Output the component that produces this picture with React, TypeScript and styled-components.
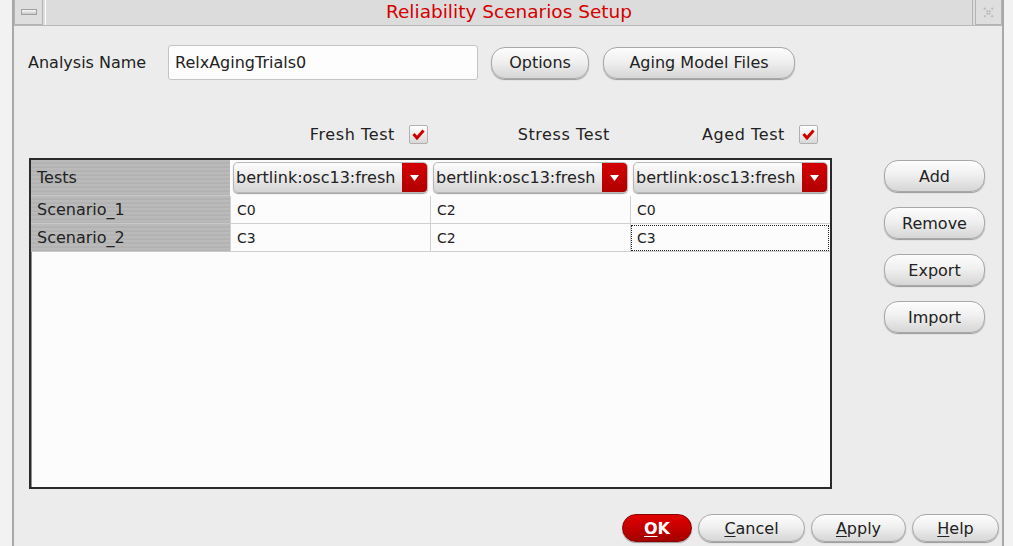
import styled, { createGlobalStyle } from 'styled-components';

const GlobalStyle = createGlobalStyle`
  body {
    margin: 0;
    background: #f2f2f2;
    font-family: 'DejaVu Sans', 'Liberation Sans', sans-serif;
    color: #222;
  }
`;

const Window = styled.div`
  margin-left: 12px;
  width: 992px;
  height: 546px;
  box-sizing: border-box;
  border-left: 2px solid #a8a8a8;
  border-right: 2px solid #a8a8a8;
  background: #ececec;
  display: flex;
  flex-direction: column;
  overflow: hidden;
`;

const TitleBar = styled.div`
  height: 25px;
  display: flex;
  background: #dcdcdc;
  border-bottom: 1px solid #b8b8b8;
`;

const TitleButton = styled.div<{ $w: number }>`
  width: ${({ $w }) => $w}px;
  box-sizing: border-box;
  border: 1px solid #b4b4b4;
  border-top: none;
  background: #dedede;
  display: flex;
  align-items: center;
  justify-content: center;
`;

const MinBar = styled.div`
  width: 14px;
  height: 4px;
  background: linear-gradient(#f8f8f8, #c8c8c8);
  border: 1px solid #a0a0a0;
`;

const Title = styled.div`
  flex: 1;
  margin: 0 2px;
  border-left: 1px solid #fff;
  border-right: 1px solid #b4b4b4;
  text-align: center;
  color: #d40000;
  font-size: 18.5px;
  line-height: 24px;
`;

const Content = styled.div`
  flex: 1;
  display: flex;
  flex-direction: column;
  padding: 19px 0 0 14px;
`;

const NameRow = styled.div`
  display: flex;
  align-items: center;
  height: 35px;
`;

const Label = styled.div`
  width: 140px;
  font-size: 16px;
`;

const TextInput = styled.div`
  width: 310px;
  height: 35px;
  box-sizing: border-box;
  border: 1px solid #c4c4c4;
  border-radius: 3px;
  background: #fdfdfd;
  padding-left: 6px;
  font-size: 16px;
  line-height: 33px;
`;

const PillButton = styled.div<{ $w: number; $h?: number; $ml?: number }>`
  width: ${({ $w }) => $w}px;
  height: ${({ $h }) => $h ?? 32}px;
  margin-left: ${({ $ml }) => $ml ?? 0}px;
  box-sizing: border-box;
  border: 1px solid #a8a8a8;
  border-radius: 14px;
  background: linear-gradient(#fdfdfd 0%, #f0f0f0 45%, #d6d6d6 100%);
  box-shadow: 0 1px 1px #9a9a9a;
  display: flex;
  align-items: center;
  justify-content: center;
  font-size: 16px;
  color: #222;
  flex-shrink: 0;
`;

const OkButton = styled(PillButton)`
  border-color: #8a0000;
  background: linear-gradient(#e20000 0%, #c40000 50%, #a20000 100%);
  color: #fff;
  font-weight: bold;
`;

const CheckRow = styled.div`
  margin-top: 45px;
  display: grid;
  grid-template-columns: 202px 200px 200px 200px;
  height: 19px;
  font-size: 16px;
  letter-spacing: 0.6px;
`;

const CheckCell = styled.div<{ $pr: number }>`
  display: flex;
  align-items: center;
  justify-content: flex-end;
  gap: 14px;
  padding-right: ${({ $pr }) => $pr}px;
`;

const CheckBox = styled.div`
  width: 19px;
  height: 19px;
  box-sizing: border-box;
  border: 1px solid #b0b0b0;
  border-radius: 2px;
  background: linear-gradient(#ffffff, #d8d8d8);
  display: flex;
  align-items: center;
  justify-content: center;
`;

const MainRow = styled.div`
  margin-top: 14px;
  display: flex;
`;

const Table = styled.div`
  margin-left: 1px;
  width: 803px;
  height: 331px;
  box-sizing: border-box;
  border: 2px solid #2a2a2a;
  box-shadow: inset 1px 1px 0 #909090;
  background: #fcfcfc;
  display: grid;
  grid-template-columns: 199px 200px 200px 200px;
  grid-template-rows: 36px 28px 28px;
  align-content: start;
`;

const HeadCell = styled.div`
  background: repeating-linear-gradient(#bababa 0px, #bababa 2px, #aeaeae 3px, #b6b6b6 4px);
  border-bottom: 1px solid #c8c8c8;
  padding-left: 6px;
  display: flex;
  align-items: center;
  font-size: 16px;
`;

const ColumnHead = styled.div`
  padding: 2px 2px 2px 3px;
  background: #fcfcfc;
`;

const Dropdown = styled.div`
  height: 31px;
  box-sizing: border-box;
  display: flex;
  border: 1px solid #b8b8b8;
  border-radius: 5px;
  background: linear-gradient(#fdfdfd, #e6e6e6 60%, #d4d4d4);
  box-shadow: 0 1px 1px #a0a0a0;
  overflow: hidden;
  font-size: 16px;
`;

const DropText = styled.div`
  flex: 1;
  padding-left: 2px;
  line-height: 29px;
  white-space: nowrap;
  overflow: hidden;
`;

const DropArrow = styled.div`
  width: 25px;
  background: linear-gradient(#d40000, #b00000);
  display: flex;
  align-items: center;
  justify-content: center;
`;

const Cell = styled.div<{ $focus?: boolean }>`
  border-left: 1px solid #d0d0d0;
  border-bottom: 1px solid #d0d0d0;
  padding-left: 6px;
  display: flex;
  align-items: center;
  font-size: 14px;
  outline: ${({ $focus }) => ($focus ? '1px dotted #222' : 'none')};
  outline-offset: -2px;
`;

const SideButtons = styled.div`
  margin-left: 52px;
  padding-top: 2px;
  display: flex;
  flex-direction: column;
  gap: 15px;
`;

const Footer = styled.div`
  margin-top: 25px;
  padding-right: 3px;
  display: flex;
  justify-content: flex-end;
  gap: 6px;
`;

const U = styled.span`
  text-decoration: underline;
  text-underline-offset: 2px;
`;

function Check() {
  return (
    <CheckBox>
      <svg width="13" height="11" viewBox="0 0 13 11">
        <path d="M1.5 5 L5 9 L11.5 1.5" fill="none" stroke="#cc0000" strokeWidth="3" />
      </svg>
    </CheckBox>
  );
}

function TestSelect() {
  return (
    <ColumnHead>
      <Dropdown>
        <DropText>bertlink:osc13:fresh</DropText>
        <DropArrow>
          <svg width="9" height="6" viewBox="0 0 9 6">
            <path d="M0 0 H9 L4.5 6 Z" fill="#fff" />
          </svg>
        </DropArrow>
      </Dropdown>
    </ColumnHead>
  );
}

const scenarios = [
  { name: 'Scenario_1', values: ['C0', 'C2', 'C0'] },
  { name: 'Scenario_2', values: ['C3', 'C2', 'C3'] },
];

export default function App() {
  return (
    <>
      <GlobalStyle />
      <Window>
        <TitleBar>
          <TitleButton $w={29}>
            <MinBar />
          </TitleButton>
          <Title>Reliability Scenarios Setup</Title>
          <TitleButton $w={27}>
            <svg width="13" height="13" viewBox="0 0 13 13">
              <path d="M2 2 L11 11 M11 2 L2 11" stroke="#bdbdbd" strokeWidth="2" strokeDasharray="2 1.5" />
            </svg>
          </TitleButton>
        </TitleBar>
        <Content>
          <NameRow>
            <Label>Analysis Name</Label>
            <TextInput>RelxAgingTrials0</TextInput>
            <PillButton $w={98} $ml={13}>Options</PillButton>
            <PillButton $w={192} $ml={14}>Aging Model Files</PillButton>
          </NameRow>
          <CheckRow>
            <div />
            <CheckCell $pr={2}>
              Fresh Test
              <Check />
            </CheckCell>
            <CheckCell $pr={20}>Stress Test</CheckCell>
            <CheckCell $pr={12}>
              Aged Test
              <Check />
            </CheckCell>
          </CheckRow>
          <MainRow>
            <Table>
              <HeadCell>Tests</HeadCell>
              <TestSelect />
              <TestSelect />
              <TestSelect />
              {scenarios.map((s, r) => (
                <>
                  <HeadCell key={s.name}>{s.name}</HeadCell>
                  {s.values.map((v, c) => (
                    <Cell key={`${s.name}-${c}`} $focus={r === 1 && c === 2}>
                      {v}
                    </Cell>
                  ))}
                </>
              ))}
            </Table>
            <SideButtons>
              <PillButton $w={101}>Add</PillButton>
              <PillButton $w={101}>Remove</PillButton>
              <PillButton $w={101}>Export</PillButton>
              <PillButton $w={101}>Import</PillButton>
            </SideButtons>
          </MainRow>
          <Footer>
            <OkButton $w={70} $h={28}>
              <U>O</U>K
            </OkButton>
            <PillButton $w={107} $h={28}>
              <U>C</U>ancel
            </PillButton>
            <PillButton $w={95} $h={28}>
              <U>A</U>pply
            </PillButton>
            <PillButton $w={87} $h={28}>
              <U>H</U>elp
            </PillButton>
          </Footer>
        </Content>
      </Window>
    </>
  );
}
